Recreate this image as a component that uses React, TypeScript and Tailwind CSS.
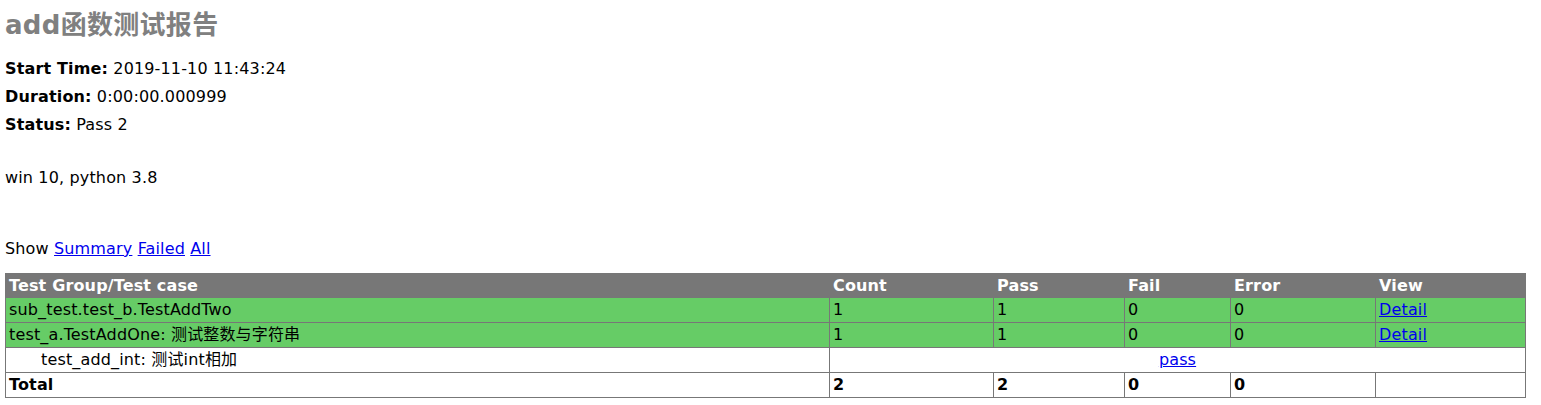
import React from "react";

const font = { fontFamily: '"DejaVu Sans", Verdana, "Noto Sans CJK SC", sans-serif' };

export default function App() {
  const td = "border border-[#777] px-[3px] py-0 align-middle";
  return (
    <div
      className="bg-white text-black text-[16px] tracking-[0.15px] px-[5px] w-[1541px] h-[405px] overflow-hidden"
      style={font}
    >
      <h1 className="mt-[10px] text-[26px] tracking-[0.3px] leading-[30px] font-bold text-[#808080]">add函数测试报告</h1>
      <div className="mt-[15px] flex flex-col">
        <p className="leading-[28px]"><strong>Start Time:</strong> 2019-11-10 11:43:24</p>
        <p className="leading-[28px]"><strong>Duration:</strong> 0:00:00.000999</p>
        <p className="leading-[28px]"><strong>Status:</strong> Pass 2</p>
      </div>
      <p className="mt-[25px] leading-[28px]">win 10, python 3.8</p>
      <p className="mt-[43px] leading-[28px]">
        Show <a className="text-[#0000ee] underline" href="#">Summary</a>{" "}
        <a className="text-[#0000ee] underline" href="#">Failed</a>{" "}
        <a className="text-[#0000ee] underline" href="#">All</a>
      </p>
      <table className="mt-[10px] w-[1520px] table-fixed border-collapse border border-[#777] leading-[20px]">
        <colgroup>
          <col className="w-[824px]" />
          <col className="w-[164px]" />
          <col className="w-[131px]" />
          <col className="w-[106px]" />
          <col className="w-[145px]" />
          <col className="w-[150px]" />
        </colgroup>
        <tbody>
          <tr className="bg-[#777] text-white font-bold h-[24px]">
            <td className={td}>Test Group/Test case</td>
            <td className={td}>Count</td>
            <td className={td}>Pass</td>
            <td className={td}>Fail</td>
            <td className={td}>Error</td>
            <td className={td}>View</td>
          </tr>
          <tr className="bg-[#66cc66] h-[25px]">
            <td className={td}>sub_test.test_b.TestAddTwo</td>
            <td className={td}>1</td>
            <td className={td}>1</td>
            <td className={td}>0</td>
            <td className={td}>0</td>
            <td className={td}><a className="text-[#0000ee] underline" href="#">Detail</a></td>
          </tr>
          <tr className="bg-[#66cc66] h-[25px]">
            <td className={td}>test_a.TestAddOne: 测试整数与字符串</td>
            <td className={td}>1</td>
            <td className={td}>1</td>
            <td className={td}>0</td>
            <td className={td}>0</td>
            <td className={td}><a className="text-[#0000ee] underline" href="#">Detail</a></td>
          </tr>
          <tr className="h-[25px]">
            <td className={td}><div className="ml-[32px]">test_add_int: 测试int相加</div></td>
            <td className={td + " text-center"} colSpan={5}>
              <a className="text-[#0000ee] underline" href="#">pass</a>
            </td>
          </tr>
          <tr className="font-bold h-[25px]">
            <td className={td}>Total</td>
            <td className={td}>2</td>
            <td className={td}>2</td>
            <td className={td}>0</td>
            <td className={td}>0</td>
            <td className={td}>&nbsp;</td>
          </tr>
        </tbody>
      </table>
    </div>
  );
}
